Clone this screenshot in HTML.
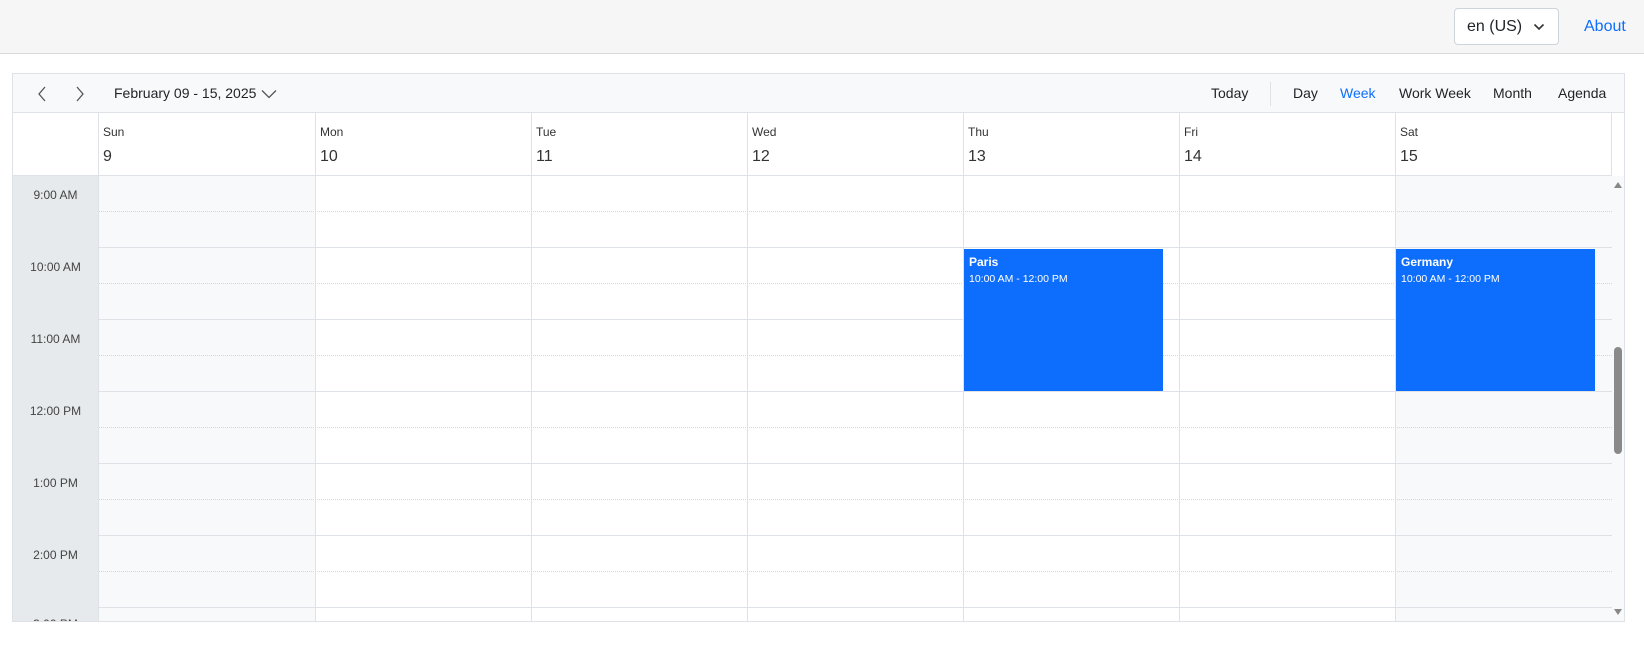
<!DOCTYPE html>
<html><head><meta charset="utf-8"><style>
*{box-sizing:border-box;margin:0;padding:0}
body{width:1644px;height:664px;background:#fff;font-family:"Liberation Sans",sans-serif;color:#212529;position:relative;overflow:hidden}
.a{position:absolute}
.top{left:0;top:0;width:1644px;height:54px;background:#f6f6f6;border-bottom:1px solid #d8d8d8}
.sel{left:1454px;top:8px;width:105px;height:37px;border:1px solid #ced4da;border-radius:4px;background:#fff;font-size:16px;line-height:35px;padding-left:12px}
.about{left:1584px;top:18px;font-size:16px;color:#0d6efd}
.sch{left:12px;top:73px;width:1613px;height:549px;border:1px solid #dee2e6;overflow:hidden}
.tb{left:0;top:0;width:1611px;height:39px;background:#f8f9fa;border-bottom:1px solid #dee2e6;font-size:14px}
.tb span{position:absolute;top:11px}
.hdr{left:0;top:39px;width:1599px;height:63px;background:#fff;border-bottom:1px solid #dee2e6}
.dl{font-size:12px;top:12px;color:#333}
.dn{font-size:16px;top:35px;color:#333}
.vl{width:1px;background:#dee2e6}
.hl{height:1px;background:#dee2e6;left:0}
.dot{height:0;border-top:1px dotted #d6d6d6}
.tm{font-size:12px;color:#444;width:85px;text-align:center;left:0}
.ev{background:#0d6efd;color:#fff;padding:6px 5px;font-size:10.5px}
.ev b{display:block;font-size:12px;margin-bottom:4px}
</style></head><body>
<div class="a top"></div>
<div class="a sel">en (US)<svg class="a" style="left:78px;top:14px" width="12" height="8" viewBox="0 0 12 8"><path d="M1.5 1.5L6 6l4.5-4.5" fill="none" stroke="#333" stroke-width="1.6"/></svg></div>
<div class="a about">About</div>

<div class="a sch">
 <div class="a tb">
  <svg class="a" style="left:24px;top:12px" width="10" height="16" viewBox="0 0 10 16"><path d="M8 1L2 8l6 7" fill="none" stroke="#555" stroke-width="1.3"/></svg>
  <svg class="a" style="left:62px;top:12px" width="10" height="16" viewBox="0 0 10 16"><path d="M2 1l6 7-6 7" fill="none" stroke="#555" stroke-width="1.3"/></svg>
  <span style="left:101px">February 09 - 15, 2025</span>
  <svg class="a" style="left:248px;top:15px" width="16" height="10" viewBox="0 0 16 10"><path d="M1 1.5l7 7 7-7" fill="none" stroke="#555" stroke-width="1.3"/></svg>
  <span style="left:1198px">Today</span>
  <div class="a" style="left:1257px;top:8px;width:1px;height:24px;background:#dee2e6"></div>
  <span style="left:1280px">Day</span>
  <span style="left:1327px;color:#0d6efd">Week</span>
  <span style="left:1386px">Work Week</span>
  <span style="left:1480px">Month</span>
  <span style="left:1545px">Agenda</span>
 </div>
 <div class="a hdr">
  <div class="a vl" style="left:85px;top:0;height:63px"></div>
  <div class="a vl" style="left:302px;top:0;height:63px"></div>
  <div class="a vl" style="left:518px;top:0;height:63px"></div>
  <div class="a vl" style="left:734px;top:0;height:63px"></div>
  <div class="a vl" style="left:950px;top:0;height:63px"></div>
  <div class="a vl" style="left:1166px;top:0;height:63px"></div>
  <div class="a vl" style="left:1382px;top:0;height:63px"></div>
  <div class="a vl" style="left:1598px;top:0;height:63px"></div>
  <span class="a dl" style="left:90px">Sun</span><span class="a dn" style="left:90px">9</span>
  <span class="a dl" style="left:307px">Mon</span><span class="a dn" style="left:307px">10</span>
  <span class="a dl" style="left:523px">Tue</span><span class="a dn" style="left:523px">11</span>
  <span class="a dl" style="left:739px">Wed</span><span class="a dn" style="left:739px">12</span>
  <span class="a dl" style="left:955px">Thu</span><span class="a dn" style="left:955px">13</span>
  <span class="a dl" style="left:1171px">Fri</span><span class="a dn" style="left:1171px">14</span>
  <span class="a dl" style="left:1387px">Sat</span><span class="a dn" style="left:1387px">15</span>
 </div>
 <div class="a" style="left:0;top:102px;width:1611px;height:447px;overflow:hidden">
  <div class="a" style="left:0;top:0;width:85px;height:447px;background:#e7eaed"></div>
  <div class="a" style="left:85px;top:0;width:217px;height:447px;background:#f8f9fa"></div>
  <div class="a" style="left:1382px;top:0;width:217px;height:447px;background:#f8f9fa"></div>
  <div class="a dot" style="left:85px;width:1514px;top:35px"></div>
  <div class="a dot" style="left:85px;width:1514px;top:107px"></div>
  <div class="a dot" style="left:85px;width:1514px;top:179px"></div>
  <div class="a dot" style="left:85px;width:1514px;top:251px"></div>
  <div class="a dot" style="left:85px;width:1514px;top:323px"></div>
  <div class="a dot" style="left:85px;width:1514px;top:395px"></div>
  <div class="a hl" style="left:85px;width:1514px;top:71px"></div>
  <div class="a hl" style="left:85px;width:1514px;top:143px"></div>
  <div class="a hl" style="left:85px;width:1514px;top:215px"></div>
  <div class="a hl" style="left:85px;width:1514px;top:287px"></div>
  <div class="a hl" style="left:85px;width:1514px;top:359px"></div>
  <div class="a hl" style="left:85px;width:1514px;top:431px"></div>
  <div class="a vl" style="left:85px;top:0;height:447px"></div>
  <div class="a vl" style="left:302px;top:0;height:447px"></div>
  <div class="a vl" style="left:518px;top:0;height:447px"></div>
  <div class="a vl" style="left:734px;top:0;height:447px"></div>
  <div class="a vl" style="left:950px;top:0;height:447px"></div>
  <div class="a vl" style="left:1166px;top:0;height:447px"></div>
  <div class="a vl" style="left:1382px;top:0;height:447px"></div>
  <span class="a tm" style="top:12px">9:00 AM</span>
  <span class="a tm" style="top:84px">10:00 AM</span>
  <span class="a tm" style="top:156px">11:00 AM</span>
  <span class="a tm" style="top:228px">12:00 PM</span>
  <span class="a tm" style="top:300px">1:00 PM</span>
  <span class="a tm" style="top:372px">2:00 PM</span>
  <span class="a tm" style="top:441px">3:00 PM</span>
  <div class="a ev" style="left:951px;top:73px;width:199px;height:142px"><b>Paris</b>10:00 AM - 12:00 PM</div>
  <div class="a ev" style="left:1383px;top:73px;width:199px;height:142px"><b>Germany</b>10:00 AM - 12:00 PM</div>
  <div class="a" style="left:1599px;top:0;width:12px;height:447px;background:#f8f9fa"></div>
  <svg class="a" style="left:1600px;top:5px" width="10" height="8" viewBox="0 0 10 8"><path d="M5 1L9 7H1z" fill="#888"/></svg>
  <div class="a" style="left:1601px;top:171px;width:8px;height:107px;background:#8a8a8a;border-radius:4px"></div>
  <svg class="a" style="left:1600px;top:432px" width="10" height="8" viewBox="0 0 10 8"><path d="M1 1h8L5 7z" fill="#888"/></svg>
 </div>
</div>
</body></html>
